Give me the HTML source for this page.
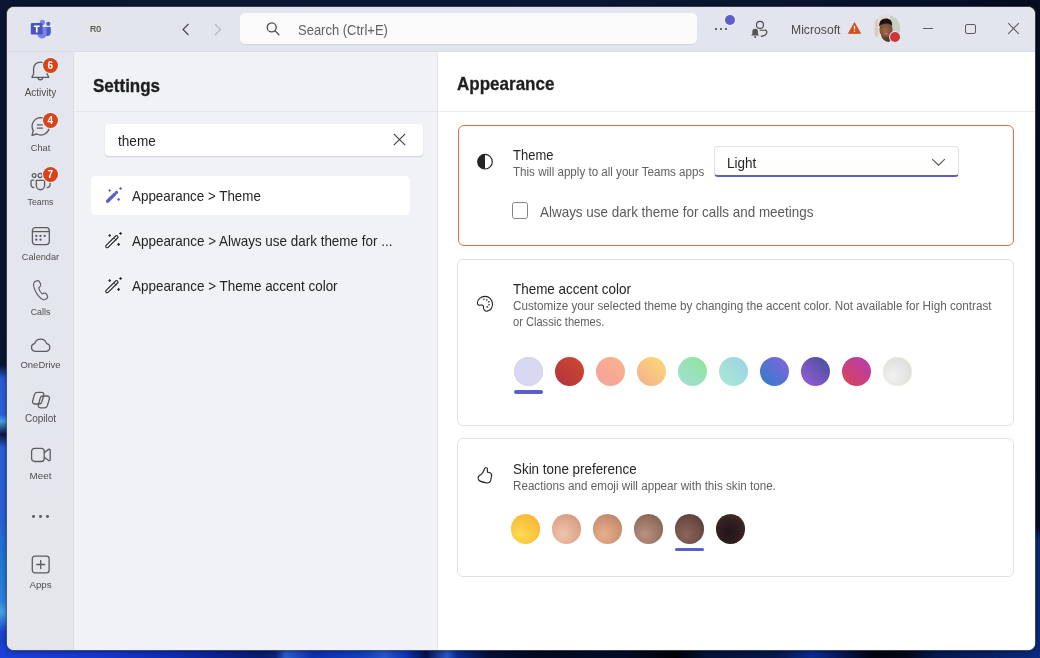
<!DOCTYPE html>
<html><head><meta charset="utf-8">
<style>
*{box-sizing:border-box;margin:0;padding:0}
html,body{width:1040px;height:658px;overflow:hidden}
body{position:relative;font-family:"Liberation Sans",sans-serif;color:#242424;background:#09152e}
#bgt{position:absolute;left:0;top:0;width:1040px;height:10px;background:linear-gradient(90deg,#0a1832 0%,#0b1a36 50%,#081430 80%,#050c20 100%)}
#bgb{position:absolute;left:0;top:644px;width:1040px;height:14px;
background:linear-gradient(90deg,#1b40d8 0%,#1636cc 10%,#0f2cb0 17%,#0a2290 21%,#081c70 25%,#0a2378 26.5%,#2a5ed0 27.5%,#0c30b0 30%,#1240c0 35%,#2656d0 37%,#0d34b8 39%,#05124a 41%,#2a58c8 43%,#0a2a90 44%,#041038 47%,#020a20 52%,#030d2a 60%,#010308 65%,#041238 68%,#061a50 75%,#0a2a90 78%,#081e68 80%,#020410 84%,#030818 87%,#061850 90%,#0a2a80 100%)}
#bgr{position:absolute;left:1030px;top:0;width:10px;height:658px;
background:linear-gradient(180deg,#060e22 0%,#040a1a 60%,#060e28 80%,#0a2a7a 82%,#0b2c80 100%)}
#bgl{position:absolute;left:0;top:0;width:8px;height:658px;
background:linear-gradient(180deg,#0b1732 0%,#0a1530 55.5%,#2a5cd8 57.5%,#2c60dc 63%,#48a0e8 64%,#0a1840 66%,#2a60d8 68%,#2a60d8 78%,#1e78d8 85%,#2c80e0 91%,#4aa0e8 93%,#1a44d0 96%,#1838c8 100%)}
.a{position:absolute;white-space:nowrap}
#win{position:absolute;left:7px;top:7px;width:1028px;height:643px;border-radius:7px;overflow:hidden;background:#fff;
 box-shadow:0 0 0 1px rgba(90,96,110,.6),0 0 5px 1px rgba(0,0,0,.45)}
#title{position:absolute;left:0;top:0;width:1028px;height:45px;background:#e3e5ee;border-bottom:1px solid #d9dce4}
#side{position:absolute;left:0;top:45px;width:67px;height:598px;background:linear-gradient(180deg,#e3e6ee 0%,#e3e6ed 50%,#e5e6eb 100%);border-right:1px solid #dcdee5}
#lp{position:absolute;left:67px;top:45px;width:364px;height:598px;background:#f0f2f6;border-right:1px solid #e4e6ea}
#rp{position:absolute;left:431px;top:45px;width:597px;height:598px;background:#fff}
.hdiv{position:absolute;height:1px;background:#e8e9ed}
.lab{position:absolute;font-size:10px;line-height:10px;color:#4f4f4f;text-align:center;width:67px;left:7px}
.badge{position:absolute;width:15.2px;height:15.2px;border-radius:50%;background:#d74419;color:#fff;font-size:10px;font-weight:700;line-height:15.2px;text-align:center;box-shadow:0 0 0 1px #eef1f6}
svg{position:absolute;overflow:visible}
.sw{position:absolute;top:356.5px;width:29px;height:29px;border-radius:50%}
.sk{position:absolute;top:514.2px;width:29.4px;height:29.4px;border-radius:50%}
#ui{position:absolute;left:0;top:0;width:1040px;height:658px;will-change:transform;clip-path:inset(7px 5px 8px 7px round 7px)}
</style></head>
<body>
<div id="bgt"></div><div id="bgl"></div><div id="bgr"></div><div id="bgb"></div>
<div id="win">
  <div id="title"></div>
  <div id="side"></div>
  <div id="lp"></div>
  <div id="rp"></div>
</div>
<div id="ui">
<!-- TITLEBAR -->
<svg style="left:30px;top:19px" width="22" height="20" viewBox="0 0 22 20">
  <circle cx="12.4" cy="3.4" r="2.6" fill="#7b83eb"/>
  <circle cx="18.3" cy="4.8" r="2.1" fill="#5059c9"/>
  <path d="M14.5 8h5.4a0.9 0.9 0 0 1 .9.9v4.6a3.4 3.4 0 0 1-3.4 3.4h0a3.4 3.4 0 0 1-3.4-3.4V8z" fill="#5059c9"/>
  <path d="M8 8h7.6a1 1 0 0 1 1 1v6a4.6 4.6 0 0 1-4.6 4.6h0A4.6 4.6 0 0 1 7.4 15V8.6z" fill="#7b83eb"/>
  <rect x="0.8" y="3.9" width="11.8" height="11.6" rx="1.2" fill="#4b53bc"/>
  <path d="M3.8 6.4h5.9v1.5H7.6v5.7H5.9V7.9H3.8z" fill="#fff"/>
</svg>
<div class="a" style="left:82.7px;top:20.7px;width:25.6px;height:15.4px;border-radius:7.7px;background:#e5e6ea"></div>
<div class="a" style="left:90.4px;top:23.4px;line-height:12px;font-size:9.8px;color:#404040;-webkit-text-stroke:0.2px #404040;transform:scaleX(0.88);transform-origin:0 0">R0</div>
<svg style="left:181px;top:23px" width="10" height="13" viewBox="0 0 10 13"><path d="M7.5 1L2 6.5L7.5 12" fill="none" stroke="#424242" stroke-width="1.1"/></svg>
<svg style="left:213px;top:23px" width="10" height="13" viewBox="0 0 10 13"><path d="M2 1L7.5 6.5L2 12" fill="none" stroke="#b4b6be" stroke-width="1.1"/></svg>
<div class="a" style="left:239.5px;top:13px;width:457.5px;height:31px;border-radius:5px;background:#fafafa;box-shadow:0 1px 1px rgba(0,0,0,.07)"></div>
<svg style="left:265px;top:21px" width="16" height="16" viewBox="0 0 16 16"><circle cx="6.7" cy="6.4" r="4.5" fill="none" stroke="#4a4a4a" stroke-width="1.3"/><path d="M9.9 9.6L13.9 13.7" stroke="#4a4a4a" stroke-width="1.3" stroke-linecap="round"/></svg>
<div class="a" style="left:298px;top:18.51px;font-size:14.4px;line-height:22px;color:#616161;transform:scaleX(0.9028);transform-origin:0 0">Search (Ctrl+E)</div>
<div class="a" style="left:714.6px;top:27.6px;width:2.5px;height:2.5px;border-radius:50%;background:#3a3a3a"></div>
<div class="a" style="left:719.6px;top:27.6px;width:2.5px;height:2.5px;border-radius:50%;background:#3a3a3a"></div>
<div class="a" style="left:724.6px;top:27.6px;width:2.5px;height:2.5px;border-radius:50%;background:#3a3a3a"></div>
<div class="a" style="left:725px;top:15px;width:10px;height:10px;border-radius:50%;background:#5b5fc7;box-shadow:0 0 0 1px #eceef4"></div>
<svg style="left:750px;top:20px" width="19" height="19" viewBox="0 0 19 19">
  <circle cx="10" cy="4.9" r="3.5" fill="none" stroke="#4a4a4a" stroke-width="1.15"/>
  <path d="M9.7 10.2H15A1.9 1.9 0 0 1 16.9 12.4C16.6 14.6 14.2 16.1 10.8 16.4" fill="none" stroke="#4a4a4a" stroke-width="1.15"/>
  <path d="M1.1 15.6H9.2L7.95 13.9V11.6A2.8 2.8 0 0 0 2.35 11.6V13.9Z" fill="#555"/>
  <circle cx="5.2" cy="16.9" r="1" fill="#555"/>
</svg>
<div class="a" style="left:790.5px;top:18.75px;font-size:12.93px;line-height:22px;color:#4a4a4a;transform:scaleX(0.9434);transform-origin:0 0">Microsoft</div>
<svg style="left:848px;top:22px" width="13" height="12" viewBox="0 0 13 12"><path d="M6.5 0.6L12.6 11.4H0.4z" fill="#d44f1a" stroke="#d44f1a" stroke-width="0.8" stroke-linejoin="round"/><path d="M6.5 3.8v3.6" stroke="#fff" stroke-width="1.3"/><circle cx="6.5" cy="9.3" r="0.75" fill="#fff"/></svg>
<svg style="left:873px;top:15px" width="28" height="28" viewBox="0 0 28 28">
  <defs><clipPath id="av"><circle cx="13.7" cy="13.6" r="13.5"/></clipPath>
  <radialGradient id="fc" cx="0.45" cy="0.55" r="0.6"><stop offset="0" stop-color="#a06a4c"/><stop offset="1" stop-color="#6e4430"/></radialGradient></defs>
  <g clip-path="url(#av)">
   <rect width="28" height="28" fill="#e4ddd4"/>
   <rect x="17" y="0" width="11" height="28" fill="#c9cfc2"/>
   <rect x="2" y="0" width="3" height="28" fill="#d6cbbf"/>
   <path d="M0 28C2 22 6 20 10 20L18 22C22 23 24 25 25 28Z" fill="#dfe8f0"/>
   <path d="M8 20C9 24 12 27 16 27L19 24C18 21 17 20 16 19Z" fill="#5a3a2a"/>
   <ellipse cx="13" cy="14.5" rx="6.6" ry="8" fill="url(#fc)"/>
   <path d="M6.2 11.5C6 6.5 8.5 3.6 12.8 3.6C17 3.6 19.3 6.2 19.2 10.6C17.5 9 15.5 8.4 12.8 8.4C10 8.4 7.8 9.4 6.2 11.5Z" fill="#1a1412"/>
   <ellipse cx="13.2" cy="18.6" rx="2" ry="0.9" fill="#b97a70"/>
  </g>
</svg>
<div class="a" style="left:890.1px;top:32.3px;width:10px;height:10px;border-radius:50%;background:#d13438;box-shadow:0 0 0 1px #e6e8ef"></div>
<div class="a" style="left:922.5px;top:27.5px;width:10px;height:1px;background:#5c5c5c"></div>
<div class="a" style="left:965px;top:23.5px;width:10.5px;height:10.5px;border:1px solid #5c5c5c;border-radius:2px"></div>
<svg style="left:1007px;top:22px" width="13" height="13" viewBox="0 0 13 13"><path d="M1.2 1.2L11.8 11.8M11.8 1.2L1.2 11.8" stroke="#5c5c5c" stroke-width="1.05"/></svg>

<!-- SIDEBAR -->
<svg style="left:30px;top:60px" width="22" height="22" viewBox="0 0 22 22" fill="none" stroke="#5c5c5c" stroke-width="1.3">
  <path d="M3.6 8.8A6.75 6.75 0 0 1 17.1 8.8V14L18.8 17.3H1.9L3.6 14Z" stroke-linejoin="round"/>
  <path d="M8 17.4a2.35 2.35 0 0 0 4.7 0"/>
</svg>
<div class="badge" style="left:42.7px;top:57.7px">6</div>
<div class="lab" style="top:88px;font-size:10px">Activity</div>

<svg style="left:30px;top:116px" width="22" height="22" viewBox="0 0 22 22" fill="none" stroke="#5c5c5c" stroke-width="1.3" stroke-linejoin="round">
  <path d="M10.8 1.6A8.7 8.7 0 1 1 6.7 18L2 19.3L3.3 14.7A8.7 8.7 0 0 1 10.8 1.6Z"/>
  <path d="M6.9 8.8H12.8M6.9 12.2H12.8"/>
</svg>
<div class="badge" style="left:42.8px;top:112.7px">4</div>
<div class="lab" style="top:142.7px;font-size:9.2px">Chat</div>

<svg style="left:30px;top:172px" width="22" height="20" viewBox="0 0 22 20" fill="none" stroke="#5c5c5c" stroke-width="1.3">
  <circle cx="4.1" cy="3.5" r="1.9"/>
  <circle cx="10.2" cy="3.5" r="2.1"/>
  <path d="M6.3 8.4H14.6V13.6A4.15 4.15 0 0 1 6.3 13.6Z" stroke-linejoin="round"/>
  <path d="M4.2 8.2H2.3A1.3 1.3 0 0 0 1 9.5V12.2A3.4 3.4 0 0 0 4.4 15.6"/>
  <path d="M16.7 8.2H18.8A1.3 1.3 0 0 1 20.1 9.5V12.2A3.4 3.4 0 0 1 16.7 15.6"/>
</svg>
<div class="badge" style="left:42.8px;top:167.2px">7</div>
<div class="lab" style="top:197.2px;font-size:8.8px">Teams</div>

<svg style="left:31px;top:226px" width="20" height="20" viewBox="0 0 20 20" fill="none" stroke="#5c5c5c" stroke-width="1.3">
  <rect x="1.4" y="1.7" width="16.9" height="16.9" rx="3"/>
  <path d="M1.4 5.6H18.3"/>
  <g fill="#5c5c5c" stroke="none"><circle cx="5.3" cy="9.9" r="1.15"/><circle cx="9.5" cy="9.9" r="1.15"/><circle cx="13.7" cy="9.9" r="1.15"/><circle cx="5.3" cy="13.7" r="1.15"/><circle cx="9.5" cy="13.7" r="1.15"/></g>
</svg>
<div class="lab" style="top:251.8px;font-size:9.2px">Calendar</div>

<svg style="left:31px;top:279px" width="20" height="23" viewBox="0 0 20 23" fill="none" stroke="#616161" stroke-width="1.3" stroke-linejoin="round">
  <g transform="translate(0.2 0.15) scale(0.91)"><path d="M5.2 2.2L6.3 1.9C7.6 1.5 8.9 2.1 9.4 3.3L10.3 5.4C10.7 6.4 10.5 7.5 9.7 8.2L8.4 9.4C8.3 9.5 8.3 9.7 8.3 9.9C8.7 12 10.1 14.4 11.8 15.9C11.9 16 12.1 16 12.3 16L14 15.4C14.9 15.1 15.9 15.4 16.5 16.2L17.6 17.8C18.3 18.8 18.2 20.1 17.3 21L16.6 21.6C15.6 22.6 14.1 22.9 12.8 22.3C9.8 21 7.1 18.1 4.9 13.6C2.7 9.1 2.1 5.6 3 3.9C3.4 3.1 4.2 2.5 5.2 2.2Z"/></g>
</svg>
<div class="lab" style="top:306.8px;font-size:8.9px">Calls</div>

<svg style="left:30px;top:337px" width="22" height="16" viewBox="0 0 22 16" fill="none" stroke="#5c5c5c" stroke-width="1.3" stroke-linejoin="round">
  <path d="M5.1 14.3A3.9 3.9 0 0 1 4.6 6.6A6.3 6.3 0 0 1 16.6 6.6A3.9 3.9 0 0 1 16.4 14.3Z"/>
</svg>
<div class="lab" style="top:359.8px;font-size:9.5px">OneDrive</div>

<svg style="left:28px;top:388px" width="26" height="24" viewBox="0 0 26 24" fill="none" stroke="#5c5c5c" stroke-width="1.3" stroke-linejoin="round">
  <path d="M9.6 4.3H13.6C15.2 4.3 16.2 5.6 15.8 7.1L13.7 14.2C13.3 15.4 12.4 16 11.2 16H6.7C5.1 16 4.2 14.7 4.6 13.2L6.6 6.1C7 5 8.1 4.3 9.6 4.3Z"/>
  <path d="M15 8H19.2C20.8 8 21.8 9.3 21.4 10.8L19.3 17.9C18.9 19.1 18 19.8 16.8 19.8H12.4C10.8 19.8 9.9 18.5 10.3 17L12.3 9.9C12.7 8.7 13.6 8 15 8Z"/>
</svg>
<div class="lab" style="top:414.2px;font-size:10px">Copilot</div>

<svg style="left:30px;top:446px" width="22" height="17" viewBox="0 0 22 17" fill="none" stroke="#5c5c5c" stroke-width="1.3" stroke-linejoin="round">
  <rect x="1.6" y="2.4" width="12.6" height="13.1" rx="3"/>
  <path d="M14.2 6.6L18.6 3.4C19.3 2.9 20.2 3.4 20.2 4.2V13.7C20.2 14.5 19.3 15 18.6 14.5L14.2 11.3"/>
</svg>
<div class="lab" style="top:470.6px;font-size:9.8px">Meet</div>

<div class="a" style="left:32.3px;top:515.4px;width:2.8px;height:2.8px;border-radius:50%;background:#5c5c5c"></div>
<div class="a" style="left:39.2px;top:515.4px;width:2.8px;height:2.8px;border-radius:50%;background:#5c5c5c"></div>
<div class="a" style="left:46px;top:515.4px;width:2.8px;height:2.8px;border-radius:50%;background:#5c5c5c"></div>

<svg style="left:30px;top:554px" width="20" height="20" viewBox="0 0 20 20" fill="none" stroke="#5c5c5c" stroke-width="1.3">
  <rect x="2.3" y="2.1" width="16.8" height="16.8" rx="2.6"/>
  <path d="M10.7 6V15M6.2 10.5H15.2"/>
</svg>
<div class="lab" style="top:580px;font-size:9.7px">Apps</div>

<!-- LEFT PANEL -->
<div class="a" style="left:93.4px;top:76.0px;font-size:19px;line-height:20px;font-weight:700;color:#1f1f1f;-webkit-text-stroke:0.35px #1f1f1f;transform:scaleX(0.895);transform-origin:0 0">Settings</div>
<div class="hdiv" style="left:74px;top:111px;width:363px;background:#e4e6eb"></div>
<div class="a" style="left:105px;top:124px;width:318px;height:32px;border-radius:4px;background:#fff;box-shadow:0 1px 1.5px rgba(0,0,0,.14)"></div>
<div class="a" style="left:118px;top:133.5px;font-size:14.4px;line-height:14px;color:#242424;transform:scaleX(0.9444);transform-origin:0 0">theme</div>
<svg style="left:393px;top:133px" width="13" height="13" viewBox="0 0 13 13"><path d="M0.8 0.8L12.2 12.2M12.2 0.8L0.8 12.2" stroke="#424242" stroke-width="1.15"/></svg>

<div class="a" style="left:91px;top:176px;width:319px;height:39px;border-radius:5px;background:#fff"></div>
<svg style="left:102px;top:184px" width="24" height="22" viewBox="0 0 24 22">
  <path d="M5.5 17.2L12.7 10.2" stroke="#5b5fc7" stroke-width="3.3" stroke-linecap="round"/>
  <circle cx="14.5" cy="8.4" r="1.65" fill="#5b5fc7"/>
  <path d="M7.7 5.1L9.1 6.5L7.7 7.9L6.3 6.5Z M18.6 2.9L20.2 4.5L18.6 6.1L17 4.5Z M16.6 13.8L18.2 15.4L16.6 17L15 15.4Z" fill="#5b5fc7"/>
</svg>
<div class="a" style="left:132px;top:188.81px;font-size:14.4px;line-height:14px;color:#242424;transform:scaleX(0.9306);transform-origin:0 0">Appearance &gt; Theme</div>

<svg style="left:102px;top:229px" width="24" height="22" viewBox="0 0 24 22">
  <path d="M5.1 17.3L14.6 8" stroke="#242424" stroke-width="3.9" stroke-linecap="round"/>
  <path d="M5.1 17.3L14.6 8" stroke="#f0f2f6" stroke-width="1.7" stroke-linecap="round"/>
  <path d="M12.3 9.2L14.3 11.2" stroke="#242424" stroke-width="1"/>
  <path d="M7.7 5L9.2 6.5L7.7 8L6.2 6.5Z M18.6 2.9L20.2 4.5L18.6 6.1L17 4.5Z M16.6 13.8L18.2 15.4L16.6 17L15 15.4Z" fill="#242424"/>
</svg>
<div class="a" style="left:132px;top:233.76px;font-size:14.4px;line-height:14px;color:#242424;transform:scaleX(0.934);transform-origin:0 0">Appearance &gt; Always use dark theme for ...</div>

<svg style="left:102px;top:274px" width="24" height="22" viewBox="0 0 24 22">
  <path d="M5.1 17.3L14.6 8" stroke="#242424" stroke-width="3.9" stroke-linecap="round"/>
  <path d="M5.1 17.3L14.6 8" stroke="#f0f2f6" stroke-width="1.7" stroke-linecap="round"/>
  <path d="M12.3 9.2L14.3 11.2" stroke="#242424" stroke-width="1"/>
  <path d="M7.7 5L9.2 6.5L7.7 8L6.2 6.5Z M18.6 2.9L20.2 4.5L18.6 6.1L17 4.5Z M16.6 13.8L18.2 15.4L16.6 17L15 15.4Z" fill="#242424"/>
</svg>
<div class="a" style="left:132px;top:278.81px;font-size:14.4px;line-height:14px;color:#242424;transform:scaleX(0.934);transform-origin:0 0">Appearance &gt; Theme accent color</div>

<!-- RIGHT PANEL -->
<div class="a" style="left:457.3px;top:74.1px;font-size:18.5px;line-height:20px;font-weight:700;color:#1f1f1f;-webkit-text-stroke:0.3px #1f1f1f;transform:scaleX(0.92);transform-origin:0 0">Appearance</div>
<div class="hdiv" style="left:438px;top:111px;width:597px;background:#ebebeb"></div>

<div class="a" style="left:457.5px;top:124.5px;width:556.5px;height:121px;border:1.5px solid #dd6a4c;border-radius:6px"></div>
<svg style="left:476px;top:153.4px" width="18" height="18" viewBox="0 0 18 18">
  <circle cx="9" cy="8.7" r="7.3" fill="none" stroke="#242424" stroke-width="1.15"/>
  <path d="M9 1.4A7.3 7.3 0 0 0 9 16Z" fill="#242424"/>
</svg>
<div class="a" style="left:513px;top:147.81px;font-size:14.4px;line-height:14px;color:#242424;transform:scaleX(0.9028);transform-origin:0 0">Theme</div>
<div class="a" style="left:513px;top:166.01px;font-size:12.3px;line-height:12px;color:#616161;transform:scaleX(0.9431);transform-origin:0 0">This will apply to all your Teams apps</div>
<div class="a" style="left:714px;top:146px;width:245px;height:31px;border:1px solid #e0e0e0;border-bottom:2px solid #5b5fc7;border-radius:4px;background:#fff"></div>
<div class="a" style="left:726.8px;top:155.5px;font-size:14.4px;line-height:14px;color:#242424;transform:scaleX(0.9375);transform-origin:0 0">Light</div>
<svg style="left:931px;top:157px" width="15" height="10" viewBox="0 0 15 10"><path d="M1.2 2.2L7.5 8.2L13.8 2.2" fill="none" stroke="#555" stroke-width="1.1"/></svg>
<div class="a" style="left:512px;top:202px;width:16px;height:16.5px;border:1px solid #858585;border-radius:2.5px"></div>
<div class="a" style="left:540.2px;top:204.51px;font-size:14.4px;line-height:14px;color:#5a5a5a;transform:scaleX(0.934);transform-origin:0 0">Always use dark theme for calls and meetings</div>

<div class="a" style="left:457px;top:258.5px;width:557px;height:167px;border:1px solid #e0e0e0;border-radius:6px"></div>
<svg style="left:476px;top:295px" width="18" height="18" viewBox="0 0 18 18" fill="none" stroke="#242424" stroke-width="1.1">
  <path d="M9 1.4C4.8 1.4 1.4 4.5 1.4 7.9C1.4 9.6 2.5 10.4 3.8 10.2C5.4 9.9 6.6 9.4 7.2 10.8C7.6 11.8 7.3 13.3 8 14.6C8.8 16.2 10.5 16.6 12.3 15.8C14.9 14.6 16.5 11.8 16.5 8.9C16.5 4.6 13.2 1.4 9 1.4Z" stroke-linejoin="round"/>
  <g fill="#242424" stroke="none"><circle cx="7.9" cy="4.3" r=".8"/><circle cx="10.8" cy="5" r=".8"/><circle cx="12.9" cy="6.9" r=".8"/><circle cx="13" cy="9.7" r=".8"/><circle cx="11.2" cy="11.9" r=".8"/></g>
</svg>
<div class="a" style="left:513px;top:281.7px;font-size:14.4px;line-height:14px;color:#242424;transform:scaleX(0.9326);transform-origin:0 0">Theme accent color</div>
<div class="a" style="left:513px;top:300.11px;font-size:12.3px;line-height:12px;color:#616161;transform:scaleX(0.9512);transform-origin:0 0">Customize your selected theme by changing the accent color. Not available for High contrast</div>
<div class="a" style="left:513px;top:315.58px;font-size:12.3px;line-height:12px;color:#616161;transform:scaleX(0.9024);transform-origin:0 0">or Classic themes.</div>

<div class="sw" style="left:514px;background:#d8d8f2;box-shadow:inset 0 0 0 1px #d6d6de"></div>
<div class="sw" style="left:555px;background:linear-gradient(225deg,#cf4a2e,#b0333f)"></div>
<div class="sw" style="left:596px;background:linear-gradient(225deg,#fbb389,#f4a19e)"></div>
<div class="sw" style="left:637px;background:linear-gradient(225deg,#fcdc74,#f4ac8e)"></div>
<div class="sw" style="left:678px;background:linear-gradient(225deg,#8fe496,#a2deda)"></div>
<div class="sw" style="left:719px;background:linear-gradient(225deg,#9cd2e4,#aae8d4)"></div>
<div class="sw" style="left:760px;background:linear-gradient(225deg,#8664e0,#2e7ec6)"></div>
<div class="sw" style="left:801px;background:linear-gradient(225deg,#444f98,#9a5ed8)"></div>
<div class="sw" style="left:842px;background:linear-gradient(225deg,#b23cb6,#dc4454)"></div>
<div class="sw" style="left:883px;background:radial-gradient(circle at 35% 65%,#f2f2f2,#d6d6d6);box-shadow:inset 0 0 0 1px #ecebd8"></div>
<div class="a" style="left:514px;top:389.5px;width:29px;height:4px;border-radius:2px;background:#5b5fc7"></div>

<div class="a" style="left:457px;top:437.5px;width:557px;height:139px;border:1px solid #e0e0e0;border-radius:6px"></div>
<svg style="left:476px;top:465.3px" width="18" height="21" viewBox="0 0 18 21" fill="none" stroke="#242424" stroke-width="1.15" stroke-linejoin="round">
  <path d="M10.3 2.5C9.5 2.3 9 2.8 8.6 3.8C7.9 5.7 7.2 7.5 5.8 8.9C4.9 9.8 3.4 10.3 2.6 11.3C1.9 12.2 2 14.3 3.2 15.5C4.5 16.8 8 17.4 10.6 17.9C12.5 18.3 13.8 17.4 14.5 15.9C15.2 14.2 15.4 11.9 15.6 10.2C15.8 8.5 14.6 7.8 13.2 7.5L11.4 7.1C11.4 5.8 11.5 4.6 11.3 3.6C11.2 3 10.8 2.6 10.3 2.5Z"/>
</svg>
<div class="a" style="left:512.6px;top:461.81px;font-size:14.4px;line-height:14px;color:#242424;transform:scaleX(0.9306);transform-origin:0 0">Skin tone preference</div>
<div class="a" style="left:513px;top:479.5px;font-size:12.3px;line-height:12px;color:#616161;transform:scaleX(0.9472);transform-origin:0 0">Reactions and emoji will appear with this skin tone.</div>

<div class="sk" style="left:510.5px;background:radial-gradient(circle at 35% 68%,#fcda50 0%,#fbc23e 55%,#f6ac2e 100%)"></div>
<div class="sk" style="left:551.5px;background:radial-gradient(circle at 38% 68%,#f0c3ad 0%,#dea68c 60%,#c58a72 100%)"></div>
<div class="sk" style="left:592.5px;background:radial-gradient(circle at 38% 68%,#e6b08e 0%,#cc9272 60%,#a8745a 100%)"></div>
<div class="sk" style="left:633.5px;background:radial-gradient(circle at 38% 68%,#b99282 0%,#95705f 60%,#745248 100%)"></div>
<div class="sk" style="left:674.5px;background:radial-gradient(circle at 38% 68%,#8d655c 0%,#6c4a43 60%,#4f3230 100%)"></div>
<div class="sk" style="left:715.5px;background:radial-gradient(circle at 45% 62%,#22141a 0%,#33221f 55%,#4c3b30 100%)"></div>
<div class="a" style="left:674.5px;top:547.5px;width:29.5px;height:3.8px;border-radius:2px;background:#5b5fc7"></div>
</div>
</body></html>
